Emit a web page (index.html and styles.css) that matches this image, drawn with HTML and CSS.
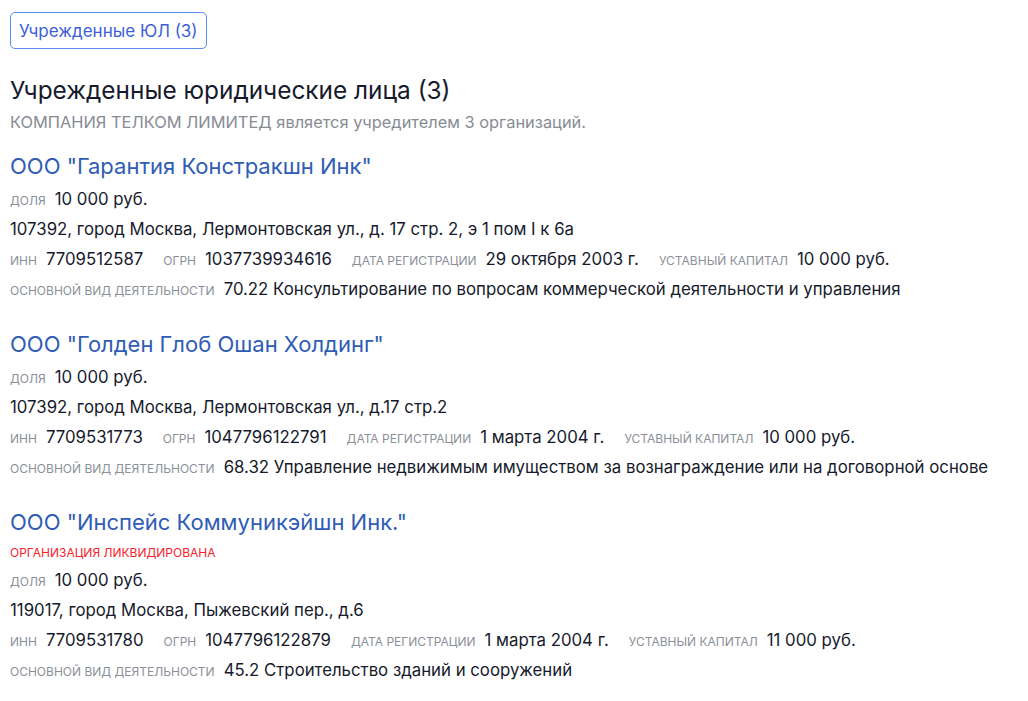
FILE: index.html
```html
<!DOCTYPE html>
<html lang="ru">

<head>
    <meta charset="UTF-8">
    <meta name="viewport" content="width=device-width, initial-scale=1.0">
    <title>Учрежденные ЮЛ</title>
    <link rel="stylesheet" href="styles.css">
</head>

<body>
    <div class="tabs">
        <button class="tab">Учрежденные ЮЛ (3)</button>
    </div>

    <h2 class="section-title">Учрежденные юридические лица (3)</h2>
    <p class="section-sub">КОМПАНИЯ ТЕЛКОМ ЛИМИТЕД является учредителем 3 организаций.</p>

    <div class="org">
        <a class="org-name" href="#">ООО "Гарантия Констракшн Инк"</a>
        <div class="row"><span class="label">доля</span><span class="value">10 000 руб.</span></div>
        <div class="row">107392, город Москва, Лермонтовская ул., д. 17 стр. 2, э 1 пом I к 6а</div>
        <div class="row">
            <span class="label">инн</span><span class="value">7709512587</span>
            <span class="label">огрн</span><span class="value">1037739934616</span>
            <span class="label">дата регистрации</span><span class="value">29 октября 2003 г.</span>
            <span class="label">уставный капитал</span><span class="value">10 000 руб.</span>
        </div>
        <div class="row"><span class="label">основной вид деятельности</span><span class="value">70.22 Консультирование по вопросам коммерческой деятельности и управления</span></div>
    </div>

    <div class="org">
        <a class="org-name" href="#">ООО "Голден Глоб Ошан Холдинг"</a>
        <div class="row"><span class="label">доля</span><span class="value">10 000 руб.</span></div>
        <div class="row">107392, город Москва, Лермонтовская ул., д.17 стр.2</div>
        <div class="row">
            <span class="label">инн</span><span class="value">7709531773</span>
            <span class="label">огрн</span><span class="value">1047796122791</span>
            <span class="label">дата регистрации</span><span class="value">1 марта 2004 г.</span>
            <span class="label">уставный капитал</span><span class="value">10 000 руб.</span>
        </div>
        <div class="row"><span class="label">основной вид деятельности</span><span class="value">68.32 Управление недвижимым имуществом за вознаграждение или на договорной основе</span></div>
    </div>

    <div class="org">
        <a class="org-name" href="#">ООО "Инспейс Коммуникэйшн Инк."</a>
        <div class="status">организация ликвидирована</div>
        <div class="row"><span class="label">доля</span><span class="value">10 000 руб.</span></div>
        <div class="row">119017, город Москва, Пыжевский пер., д.6</div>
        <div class="row">
            <span class="label">инн</span><span class="value">7709531780</span>
            <span class="label">огрн</span><span class="value">1047796122879</span>
            <span class="label">дата регистрации</span><span class="value">1 марта 2004 г.</span>
            <span class="label">уставный капитал</span><span class="value">11 000 руб.</span>
        </div>
        <div class="row"><span class="label">основной вид деятельности</span><span class="value">45.2 Строительство зданий и сооружений</span></div>
    </div>
</body>

</html>
```

FILE: styles.css
```css
body {
    margin: 0;
    padding: 12px 10px;
    font-family: Inter, "Noto Sans", sans-serif;
    color: #161a2c;
    background: #fff;
}

.tabs {
    display: flex;
}

.tab {
    font-family: inherit;
    font-size: 17px;
    color: #3d5fd6;
    background: #fff;
    border: 1px solid #5b8ef5;
    border-radius: 5px;
    height: 37px;
    padding: 0 8px;
}

.section-title {
    margin: 25px 0 0;
    font-size: 24.4px;
    font-weight: 400;
    line-height: 32px;
}

.section-sub {
    margin: 4px 0 0;
    font-size: 16.4px;
    line-height: 24px;
    color: #878b94;
}

.org {
    margin-top: 14px;
}

.org + .org {
    margin-top: 22px;
}

.org-name {
    display: block;
    font-size: 22px;
    line-height: 36px;
    color: #2f5cb5;
    text-decoration: none;
}

.status {
    font-size: 12px;
    line-height: 25px;
    text-transform: uppercase;
    color: #f5222d;
}

.row {
    display: flex;
    align-items: baseline;
    white-space: nowrap;
    font-size: 16.8px;
    line-height: 30px;
}

.label {
    font-size: 12px;
    line-height: 16px;
    text-transform: uppercase;
    color: #8b8f98;
    margin-right: 9px;
}

.value {
    margin-right: 20px;
}

.value:last-child {
    margin-right: 0;
}
```
